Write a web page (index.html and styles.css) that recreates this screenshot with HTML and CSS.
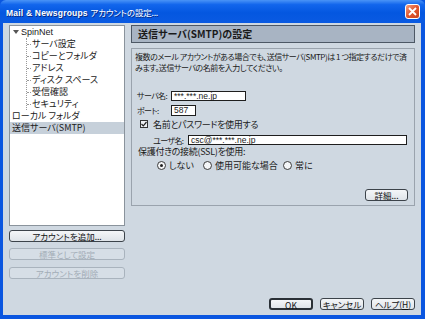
FILE: index.html
```html
<!DOCTYPE html>
<html lang="ja">
<head>
    <meta charset="UTF-8">
    <title>Mail &amp; Newsgroups アカウントの設定</title>
    <link rel="stylesheet" href="styles.css">
</head>
<body>

<div class="window">
    <div class="titlebar">
        <span class="title">Mail &amp; Newsgroups <span class="jp">アカウントの設定...</span></span>
        <span class="close">
            <svg width="9" height="9" viewBox="0 0 9 9"><path d="M1 1 L8 8 M8 1 L1 8" stroke="#fff" stroke-width="1.8"/></svg>
        </span>
    </div>

    <div class="client">
        <div class="main">
            <div class="sidebar">
                <div class="tree">
                    <div class="node root"><span class="twisty"></span>SpinNet</div>
                    <div class="children">
                        <div class="node child">サーバ設定</div>
                        <div class="node child">コピーとフォルダ</div>
                        <div class="node child">アドレス</div>
                        <div class="node child">ディスク スペース</div>
                        <div class="node child">受信確認</div>
                        <div class="node child">セキュリティ</div>
                    </div>
                    <div class="node top">ローカル フォルダ</div>
                    <div class="node top selected">送信サーバ(SMTP)</div>
                </div>
                <button class="btn wide">アカウントを追加...</button>
                <button class="btn wide" disabled>標準として設定</button>
                <button class="btn wide last" disabled>アカウントを削除</button>
            </div>

            <div class="panel">
                <div class="panel-header">送信サーバ(SMTP)の設定</div>
                <div class="group">
                    <p class="intro">複数のメール アカウントがある場合でも、送信サーバ(SMTP)は 1 つ指定するだけで済<br>みます。送信サーバの名前を入力してください。</p>

                    <div class="row server">
                        <label>サーバ名:</label>
                        <span class="field f-server">***.***.ne.jp</span>
                    </div>
                    <div class="row port">
                        <label>ポート:</label>
                        <span class="field f-port">587</span>
                    </div>
                    <div class="row check">
                        <span class="checkbox">
                            <svg width="6" height="6" viewBox="0 0 6 6"><path d="M0.5 3 L2.3 4.8 L5.5 1" stroke="#222" stroke-width="1.2" fill="none"/></svg>
                        </span>
                        <span>名前とパスワードを使用する</span>
                    </div>
                    <div class="row user">
                        <label>ユーザ名:</label>
                        <span class="field f-user">csc@***.***.ne.jp</span>
                    </div>
                    <div class="row ssl">保護付きの接続(SSL)を使用:</div>
                    <div class="row radios">
                        <span class="radio-item r1"><span class="radio on"></span>しない</span>
                        <span class="radio-item r2"><span class="radio"></span>使用可能な場合</span>
                        <span class="radio-item"><span class="radio"></span>常に</span>
                    </div>
                    <div class="row details">
                        <button class="btn small">詳細...</button>
                    </div>
                </div>
            </div>
        </div>

        <div class="footer">
            <button class="btn action default">OK</button>
            <button class="btn action">キャンセル</button>
            <button class="btn action">ヘルプ(<u>H</u>)</button>
        </div>
    </div>
</div>

</body>
</html>
```

FILE: styles.css
```css
body {
    margin: 0;
    font-family: "Noto Sans CJK JP", "Noto Sans", sans-serif;
    font-feature-settings: "palt";
    font-size: 9px;
    color: #1a1a1a;
}
.window {
    width: 425px;
    height: 319px;
    background: #0a56e0;
    display: flex;
    flex-direction: column;
}
.titlebar {
    height: 23px;
    flex: none;
    display: flex;
    align-items: center;
    justify-content: space-between;
    padding: 0 5px 0 6px;
    background: linear-gradient(#4a94f7 0%, #1266ec 20%, #0457e0 55%, #0a5ae2 100%);
    border-radius: 6px 6px 0 0;
}
.title {
    color: #ffffff;
    font-family: "Liberation Sans", "Noto Sans CJK JP", sans-serif;
    font-weight: bold;
    font-size: 8.5px;
    letter-spacing: 0.2px;
    text-shadow: 1px 1px 0 #0a2a80;
    white-space: nowrap;
}
.title .jp {
    font-family: "Noto Sans CJK JP", sans-serif;
    font-weight: normal;
    letter-spacing: -0.2px;
}
.close {
    width: 15px;
    height: 15px;
    box-sizing: border-box;
    border: 1px solid #ffffff;
    border-radius: 3px;
    background: linear-gradient(135deg, #f5a080, #e2562e 50%, #c9441e);
    display: flex;
    align-items: center;
    justify-content: center;
}
.client {
    flex: 1;
    margin: 0 4px 4px 3px;
    background: #cfd8e1;
    padding: 2px 6px 5px 6px;
    display: flex;
    flex-direction: column;
}
.main {
    flex: 1;
    display: flex;
    gap: 6px;
}
.sidebar {
    width: 116px;
    flex: none;
    display: flex;
    flex-direction: column;
}
.tree {
    height: 201px;
    box-sizing: border-box;
    background: #ffffff;
    border: 1px solid #8a939c;
    padding-left: 1px;
    margin-bottom: 4px;
}
.node {
    height: 12px;
    line-height: 12px;
    white-space: nowrap;
}
.root {
    padding-left: 2px;
    display: flex;
    align-items: center;
    font-family: "Liberation Sans", sans-serif;
}
.twisty {
    width: 0;
    height: 0;
    border-left: 3.5px solid transparent;
    border-right: 3.5px solid transparent;
    border-top: 4px solid #555;
    margin-right: 2px;
}
.children {
    margin-left: 15px;
    border-left: 1px dotted #999;
}
.child {
    padding-left: 5px;
    position: relative;
}
.child::before {
    content: "";
    position: absolute;
    left: 0;
    top: 6px;
    width: 4px;
    border-top: 1px dotted #999;
}
.top {
    padding-left: 1px;
}
.selected {
    background: #c6d0da;
    margin-left: -1px;
    padding-left: 2px;
}
.btn {
    font-family: "Noto Sans CJK JP", sans-serif;
    font-feature-settings: "palt";
    font-size: 8.5px;
    color: #111;
    background: linear-gradient(#f4f6f8, #dfe4e9);
    border: 1px solid #3c434a;
    border-radius: 3px;
    padding: 0;
    line-height: 10px;
    white-space: nowrap;
}
.btn:disabled {
    color: #a3adb7;
    border-color: #a9b3bd;
    background: #d6dee6;
}
.wide {
    height: 12px;
    width: 116px;
    margin-bottom: 6px;
}
.wide.last {
    margin-top: 1px;
}
.panel {
    flex: 1;
    min-width: 0;
    display: flex;
    flex-direction: column;
}
.panel-header {
    height: 18px;
    box-sizing: border-box;
    background: #a8b4c3;
    border: 1px solid #4d5865;
    font-weight: bold;
    font-size: 10px;
    line-height: 16px;
    padding-left: 6px;
    margin-bottom: 5px;
}
.group {
    border: 1px solid #9aa3ad;
    height: 158px;
    box-sizing: border-box;
    padding: 3px 6px 0 3px;
}
.intro {
    margin: 0 0 16px;
    font-size: 8px;
    line-height: 10.5px;
    white-space: nowrap;
    letter-spacing: -0.45px;
}
.row {
    display: flex;
    align-items: center;
    white-space: nowrap;
}
.row label {
    flex: none;
    width: 34px;
    padding-left: 2px;
    font-size: 8px;
    letter-spacing: -0.6px;
}
.field {
    flex: none;
    height: 10px;
    box-sizing: border-box;
    background: #ffffff;
    border: 1px solid #1e1e1e;
    font-family: "Liberation Sans", sans-serif;
    font-size: 8.5px;
    line-height: 8px;
    padding-left: 2px;
}
.server {
    height: 13px;
}
.f-server {
    width: 75px;
}
.port {
    height: 12px;
    margin-top: 2px;
}
.f-port {
    width: 25px;
    height: 11px;
}
.check {
    height: 12px;
    margin-top: 2px;
    padding-left: 5px;
    letter-spacing: -0.3px;
}
.checkbox {
    flex: none;
    width: 8px;
    height: 8px;
    box-sizing: border-box;
    border: 1px solid #333;
    background: #eef1f4;
    margin-right: 5px;
    display: flex;
    align-items: center;
    justify-content: center;
}
.user {
    height: 12px;
    margin-top: 4px;
    padding-left: 18px;
}
.user label {
    width: 35px;
    padding-left: 0;
}
.f-user {
    width: 219px;
}
.ssl {
    height: 10px;
    padding-left: 3px;
    letter-spacing: -0.3px;
}
.radios {
    height: 12px;
    margin-top: 3px;
    padding-left: 22px;
}
.radio-item {
    display: flex;
    align-items: center;
}
.r1 {
    width: 46px;
}
.r2 {
    width: 80px;
}
.radio {
    flex: none;
    width: 9px;
    height: 9px;
    box-sizing: border-box;
    border-radius: 50%;
    border: 1px solid #3a3a3a;
    background: #f4f6f8;
    margin-right: 3px;
    display: flex;
    align-items: center;
    justify-content: center;
}
.radio.on::after {
    content: "";
    width: 3px;
    height: 3px;
    border-radius: 50%;
    background: #222;
}
.details {
    justify-content: flex-end;
    margin-top: 18px;
}
.small {
    width: 43px;
    height: 12px;
}
.footer {
    display: flex;
    justify-content: flex-end;
    gap: 7px;
}
.action {
    width: 44px;
    height: 12px;
}
.default {
    border-width: 2px;
    border-color: #2a3036;
}
```
